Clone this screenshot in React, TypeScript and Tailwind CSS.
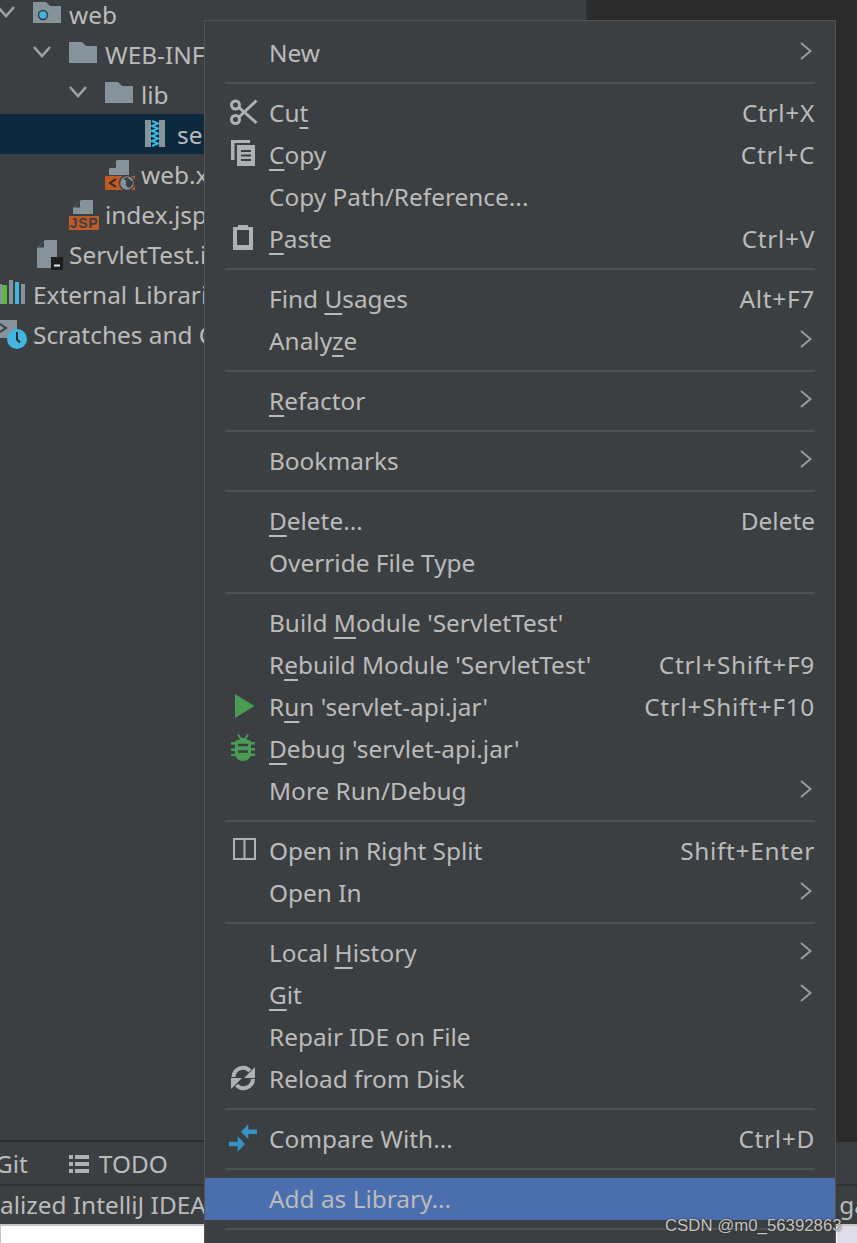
import type { ReactNode } from "react";

type Item = {
  label: ReactNode;
  shortcut?: string;
  more?: boolean;
  icon?: ReactNode;
  active?: boolean;
};

const U = ({ children }: { children: string }) => (
  <span className="underline decoration-2 underline-offset-[5px]">{children}</span>
);

const MenuIcon = ({ children }: { children: ReactNode }) => (
  <svg width="65" height="42" viewBox="0 0 65 42" className="absolute left-0 top-0">
    {children}
  </svg>
);

const cut = (
  <MenuIcon>
    <g fill="none" stroke="#afb1b3" strokeWidth="3">
      <circle cx="30.500" cy="13" r="4" />
      <circle cx="30.500" cy="27.500" r="4" />
      <path d="M34 15.500 51.500 31M34 25 51.500 8.500" />
    </g>
  </MenuIcon>
);
const copy = (
  <MenuIcon>
    <path d="M26 6h19v3H29.500v17H26z" fill="#afb1b3" />
    <path d="M32 11h18v21H32z" fill="#afb1b3" />
    <path d="M36 17h10M36 21.500h10M36 26h10" stroke="#3c3f41" strokeWidth="2" />
  </MenuIcon>
);
const paste = (
  <MenuIcon>
    <path d="M28 9h5V7h10v2h5v23H28z" fill="#afb1b3" />
    <path d="M32 12h12v15H32z" fill="#3c3f41" />
  </MenuIcon>
);
const run = (
  <MenuIcon>
    <path d="M30 8 49.500 20 30 32z" fill="#499c54" />
  </MenuIcon>
);
const debug = (
  <MenuIcon>
    <path d="M33 6.500 36 11h4l3-4.500" fill="none" stroke="#499c54" strokeWidth="2" />
    <path d="M26 14h4v-1q8-4 16 0v1h4v2.500h-4v3.500h4v2.500h-4v3h4v2.500h-4.500q-2 5-7.500 5t-7.500-5H26V26h4v-3h-4v-2.500h4V16.500h-4z" fill="#499c54" />
    <path d="M33 17h10M33 23.500h10" stroke="#3c3f41" strokeWidth="2.500" />
  </MenuIcon>
);
const split = (
  <MenuIcon>
    <path d="M29 9h21v20H29zM39.500 9v20" fill="none" stroke="#afb1b3" strokeWidth="2" />
  </MenuIcon>
);
const reload = (
  <MenuIcon>
    <g fill="none" stroke="#afb1b3" strokeWidth="4">
      <path d="M28.500 19a9.500 9.500 0 0 1 16.500-6" />
      <path d="M48 21a9.500 9.500 0 0 1-16.500 6" />
    </g>
    <path d="M50 9v11H39zM26 31V20h11z" fill="#afb1b3" />
  </MenuIcon>
);
const compare = (
  <MenuIcon>
    <path d="M36 13.700 43.300 6v5.400H52V16h-8.700v5.300z" fill="#3592c4" />
    <path d="M40 26 32.700 18v5.700H24v4.600h8.700v5.400z" fill="#3592c4" />
  </MenuIcon>
);

const groups: Item[][] = [
  [{ label: "New", more: true }],
  [
    { label: <>Cu<U>t</U></>, shortcut: "Ctrl+X", icon: cut },
    { label: <><U>C</U>opy</>, shortcut: "Ctrl+C", icon: copy },
    { label: "Copy Path/Reference..." },
    { label: <><U>P</U>aste</>, shortcut: "Ctrl+V", icon: paste },
  ],
  [
    { label: <>Find <U>U</U>sages</>, shortcut: "Alt+F7" },
    { label: <>Analy<U>z</U>e</>, more: true },
  ],
  [{ label: <><U>R</U>efactor</>, more: true }],
  [{ label: "Bookmarks", more: true }],
  [
    { label: <><U>D</U>elete...</>, shortcut: "Delete" },
    { label: "Override File Type" },
  ],
  [
    { label: <>Build <U>M</U>odule 'ServletTest'</> },
    { label: <>R<U>e</U>build Module 'ServletTest'</>, shortcut: "Ctrl+Shift+F9" },
    { label: <>R<U>u</U>n 'servlet-api.jar'</>, shortcut: "Ctrl+Shift+F10", icon: run },
    { label: <><U>D</U>ebug 'servlet-api.jar'</>, icon: debug },
    { label: "More Run/Debug", more: true },
  ],
  [
    { label: "Open in Right Split", shortcut: "Shift+Enter", icon: split },
    { label: "Open In", more: true },
  ],
  [
    { label: <>Local <U>H</U>istory</>, more: true },
    { label: <><U>G</U>it</>, more: true },
    { label: "Repair IDE on File" },
    { label: "Reload from Disk", icon: reload },
  ],
  [{ label: "Compare With...", shortcut: "Ctrl+D", icon: compare }],
  [{ label: "Add as Library...", active: true }],
];

const Chevron = () => (
  <svg width="12" height="18" viewBox="0 0 12 18" className="-mt-1 mr-[3px]">
    <path d="M1 1 10.500 9 1 17" fill="none" stroke="#9a9c9e" strokeWidth="2" />
  </svg>
);

function MenuRow({ item }: { item: Item }) {
  return (
    <div className={`relative flex h-[42px] items-center pl-[64px] pr-5 ${item.active ? "bg-[#4b6eaf]" : ""}`}>
      {item.icon}
      <span className="flex-1 whitespace-nowrap">{item.label}</span>
      {item.shortcut && (
        <span className={`whitespace-nowrap ${item.shortcut === "Delete" ? "" : "tracking-[0.7px]"}`}>{item.shortcut}</span>
      )}
      {item.more && <Chevron />}
    </div>
  );
}

function ContextMenu() {
  return (
    <div className="absolute left-[204px] top-[20px] w-[632px] h-[1240px] border border-[#515355] bg-[#3c3f41] pt-[11px]">
      {groups.map((g, i) => (
        <div key={i}>
          {i > 0 && (
            <div className="flex h-[18px] items-center pl-5 pr-5">
              <div className="h-[2px] w-full bg-[#515151]" />
            </div>
          )}
          {g.map((item, j) => (
            <MenuRow key={j} item={item} />
          ))}
        </div>
      ))}
      <div className="flex h-[18px] items-center pl-5 pr-5">
        <div className="h-[2px] w-full bg-[#515151]" />
      </div>
    </div>
  );
}

const Icon = ({ children }: { children: ReactNode }) => (
  <svg width="36" height="40" viewBox="0 0 36 40" className="shrink-0 overflow-visible">
    {children}
  </svg>
);

const folder = <path d="M0 8h13l4 4h11v17H0z" fill="#87939a" />;

const treeRows: { x: number; text: string; chevron?: boolean; icon: ReactNode; selected?: boolean }[] = [
  {
    x: 69,
    text: "web",
    chevron: true,
    icon: (
      <Icon>
        {folder}
        <circle cx="10" cy="21" r="4.500" fill="#40b6e0" stroke="#2f3e46" strokeWidth="1.500" />
      </Icon>
    ),
  },
  { x: 105, text: "WEB-INF", chevron: true, icon: <Icon>{folder}</Icon> },
  { x: 141, text: "lib", chevron: true, icon: <Icon>{folder}</Icon> },
  {
    x: 177,
    text: "servlet-api.jar",
    selected: true,
    icon: (
      <Icon>
        <path d="M4 6h6v27H4zM18 6h6v27h-6z" fill="#87939a" />
        <path d="M11 7l6 2.500-6 2.500 6 2.500-6 2.500 6 2.500-6 2.500 6 2.500-6 2.500 6 2.500-6 2.500" fill="none" stroke="#40b6e0" strokeWidth="2" />
      </Icon>
    ),
  },
  {
    x: 141,
    text: "web.xml",
    icon: (
      <Icon>
        <path d="M4 15 12 6h12v15H4z" fill="#87939a" />
        <path d="M11 7 4.500 14H11z" fill="#3c3f41" />
        <path d="M0 22h30v14H0z" fill="#c25a26" />
        <path d="M11 25l-6 4 6 4" fill="none" stroke="#2b2b2b" strokeWidth="2" />
        <circle cx="22" cy="29" r="7.500" fill="#87939a" stroke="#3c3f41" strokeWidth="1.500" />
        <path d="M18 25q4 1 3 4t3 5q4-2 4-6-4-3-6-5z" fill="#3c3f41" />
      </Icon>
    ),
  },
  {
    x: 105,
    text: "index.jsp",
    icon: (
      <Icon>
        <path d="M4 14 12 6h12v14H4z" fill="#87939a" />
        <path d="M11 7 5 13.500h6z" fill="#3c3f41" />
        <path d="M0 22h30v14H0z" fill="#c25a26" />
        <text x="15" y="34" textAnchor="middle" fontFamily="'Liberation Sans', sans-serif" fontWeight="700" fontSize="14" letterSpacing="0.6" fill="#3c3f41">JSP</text>
      </Icon>
    ),
  },
  {
    x: 69,
    text: "ServletTest.iml",
    icon: (
      <Icon>
        <path d="M4 14 12 6h12v28H4z" fill="#87939a" />
        <path d="M11 7 5 13.500h6z" fill="#3c3f41" />
        <path d="M18 23h12v13H18z" fill="#1e1e1e" />
        <path d="M21 31.500h6" stroke="#e8e8e8" strokeWidth="2" />
      </Icon>
    ),
  },
  {
    x: 33,
    text: "External Libraries",
    icon: (
      <Icon>
        <path d="M3 10h2v20H3z" fill="#87939a" />
        <path d="M5 11h5v19H5z" fill="#62b543" />
        <path d="M12 6h4v24h-4z" fill="#87939a" />
        <path d="M18 8h4v22h-4z" fill="#40b6e0" />
        <path d="M24 10h4v20h-4z" fill="#87939a" />
      </Icon>
    ),
  },
  {
    x: 33,
    text: "Scratches and Consoles",
    icon: (
      <Icon>
        <path d="M3 6h17v18H3z" fill="#87939a" />
        <path d="M3 10l6 4-6 4" fill="none" stroke="#3c3f41" strokeWidth="2" />
        <circle cx="20" cy="25" r="10" fill="#40b6e0" />
        <path d="M20 18v7.500l3 3" fill="none" stroke="#2b2b2b" strokeWidth="2" />
      </Icon>
    ),
  },
];

function ProjectTree() {
  return (
    <div className="-mt-[6px] flex flex-col">
      {treeRows.map((r) => (
        <div key={r.text} className={`flex h-10 items-center ${r.selected ? "bg-[#0d293e]" : ""}`}>
          <div className="flex h-full w-9 shrink-0 items-center" style={{ marginLeft: r.x - 72 }}>
            {r.chevron && (
              <svg width="36" height="40" viewBox="0 0 36 40" className="shrink-0">
                <path d="M1 13 9 22 17 13" fill="none" stroke="#a0a2a4" strokeWidth="2.500" />
              </svg>
            )}
          </div>
          {r.icon}
          <span className="whitespace-nowrap pt-[2px]">{r.text}</span>
        </div>
      ))}
    </div>
  );
}

export default function App() {
  return (
    <div className="relative flex h-[1243px] w-[857px] flex-col overflow-hidden bg-[#3c3f41] font-['Noto_Sans',sans-serif] text-[24.4px] text-[#bbbbbb]">
      <div className="flex h-[1140px] shrink-0">
        <aside className="w-[586px] overflow-hidden">
          <ProjectTree />
        </aside>
        <section className="flex-1 border-l border-[#323232] bg-[#2b2b2b]" />
      </div>
      <div className="flex h-[44px] shrink-0 items-center gap-[41px] border-t-2 border-[#2b2b2b] pt-[2px]">
        <span className="-ml-[5px]">Git</span>
        <div className="flex items-center gap-[10px]">
          <svg width="20" height="18" viewBox="0 0 20 18">
            <path d="M0 0h4v4H0zM6 0h14v4H6zM0 7h4v4H0zM6 7h14v4H6zM0 14h4v4H0zM6 14h14v4H6z" fill="#afb1b3" />
          </svg>
          <span>TODO</span>
        </div>
      </div>
      <div className="flex h-[40px] shrink-0 items-center justify-between border-t-2 border-[#323232]">
        <span>alized IntelliJ IDEA</span>
        <span className="-mr-[11px]">ga</span>
      </div>
      <div className="flex flex-1 border-t-2 border-[#c4c4c4]">
        <div className="flex-1 border-l border-[#c4c4c4] bg-white" />
        <div className="w-[20px] bg-[#dfdde9]" />
      </div>
      <ContextMenu />
      <span className="absolute left-[665px] top-[1213px] font-['Liberation_Sans',sans-serif] text-[16.8px] text-[#c4c4c4] [text-shadow:0_0_2px_#222]">
        CSDN @m0_56392863
      </span>
    </div>
  );
}
